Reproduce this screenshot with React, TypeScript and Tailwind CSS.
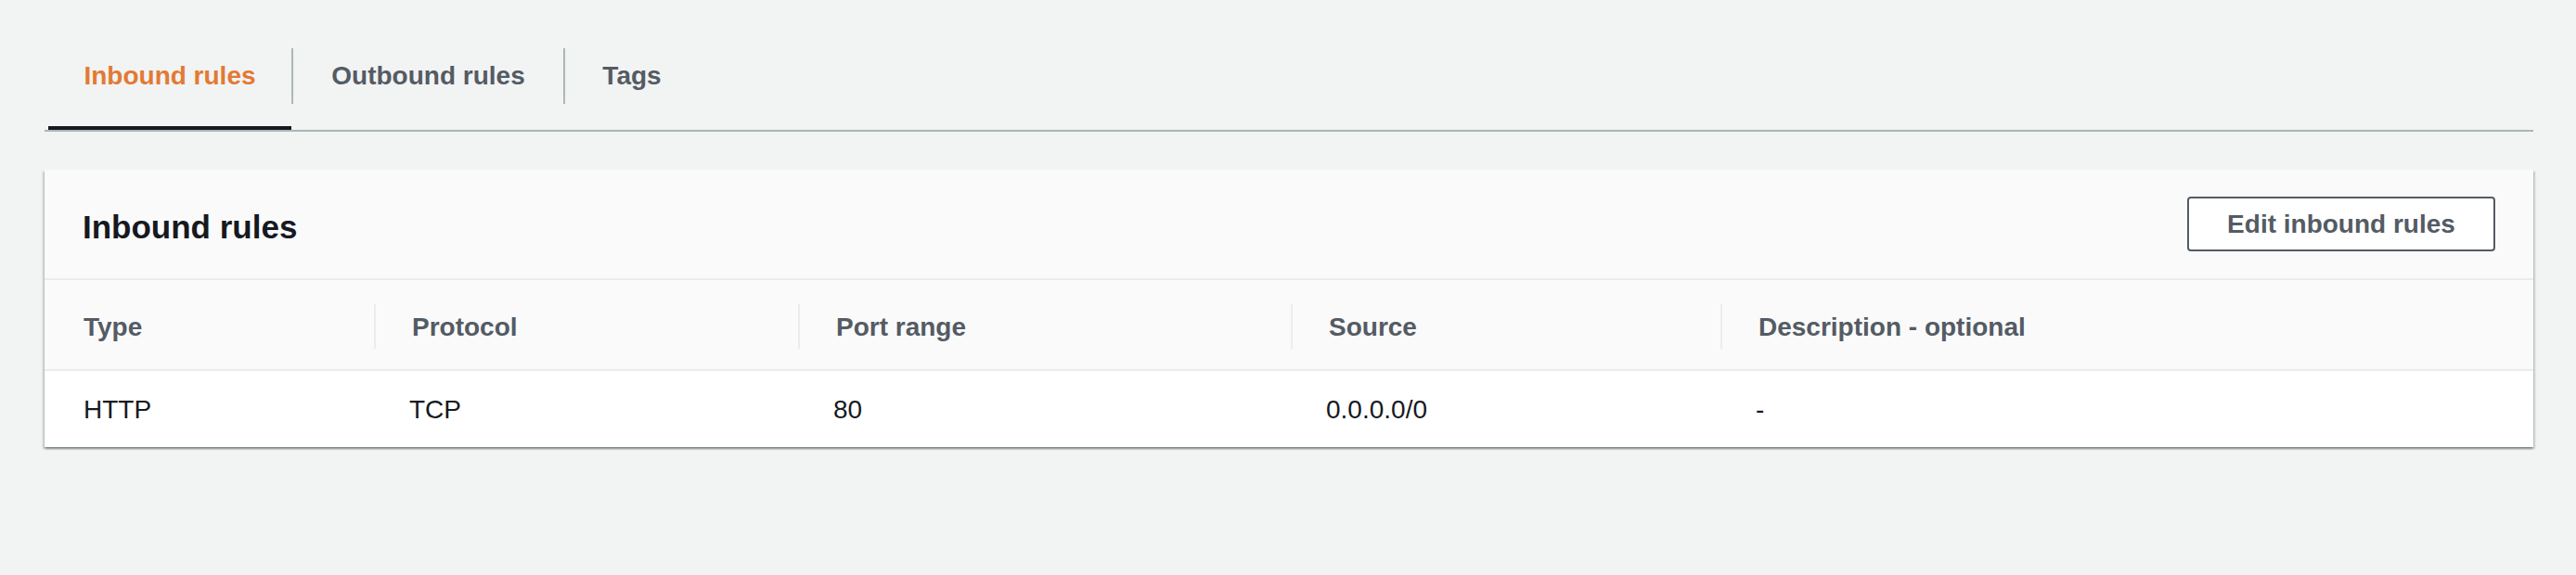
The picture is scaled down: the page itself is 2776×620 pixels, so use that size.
import React from "react";

const font = { fontFamily: '"Liberation Sans", Arial, sans-serif' };

function Tab({ label, active, width }: { label: string; active?: boolean; width: string }) {
  return (
    <div className={`flex flex-col ${width}`}>
      <div
        className={`h-[60px] flex items-center justify-center text-[28px] leading-[32px] font-bold whitespace-nowrap ${
          active ? "text-[#e27a33]" : "text-[#545b64]"
        }`}
      >
        {label}
      </div>
      <div className="h-[24px]" />
      <div className={`h-[4px] ${active ? "bg-[#16191f]" : "bg-transparent"}`} />
    </div>
  );
}

function Sep() {
  return <div className="w-[2px] h-[60px] bg-[#aab7b8] shrink-0" />;
}

const headers = ["Type", "Protocol", "Port range", "Source", "Description - optional"];
const row = ["HTTP", "TCP", "80", "0.0.0.0/0", "-"];

export default function App() {
  return (
    <div className="w-full h-[620px] bg-[#f2f3f3] pl-[48px] pr-[46px]" style={font}>
      {/* Tabs */}
      <div className="pt-[52px] border-b-2 border-[#aab7b8]">
        <div className="flex items-start ml-[4px]">
          <Tab label="Inbound rules" active width="w-[262px]" />
          <Sep />
          <Tab label="Outbound rules" width="w-[291px]" />
          <Sep />
          <Tab label="Tags" width="w-[144px]" />
        </div>
      </div>

      {/* Panel */}
      <div className="mt-[41px] bg-white shadow-[0_2px_2px_0_rgba(0,28,36,0.3),2px_2px_2px_0_rgba(0,28,36,0.15),-2px_2px_2px_0_rgba(0,28,36,0.15)]">
        <div className="h-[119px] bg-[#fafafa] border-b-2 border-[#eaeded] flex items-start justify-between pl-[41px] pr-[41px] pt-[29px]">
          <h2 className="mt-[13px] text-[35px] leading-[40px] font-bold text-[#16191f]">Inbound rules</h2>
          <button className="w-[332px] h-[59px] bg-white border-2 border-[#545b64] rounded-[4px] flex items-center justify-center text-[28px] leading-[32px] font-bold text-[#545b64]">
            Edit inbound rules
          </button>
        </div>
        <div className="grid grid-cols-[355px_457px_531px_463px_1fr] bg-[#fafafa] border-b-2 border-[#eaeded] h-[98px]">
          {headers.map((h, i) => (
            <div key={h} className="flex items-start">
              {i > 0 && <div className="w-[2px] h-[48px] mt-[26px] bg-[#eaeded] shrink-0" />}
              <div
                className={`pt-[35px] ${i > 0 ? "pl-[39px]" : "pl-[42px]"} text-[28px] leading-[32px] font-bold text-[#545b64] whitespace-nowrap`}
              >
                {h}
              </div>
            </div>
          ))}
        </div>
        <div className="grid grid-cols-[355px_457px_531px_463px_1fr] bg-white h-[82px]">
          {row.map((c, i) => (
            <div
              key={i}
              className={`pt-[26px] ${i === 0 ? "pl-[42px]" : "pl-[38px]"} text-[28px] leading-[32px] text-[#16191f] whitespace-nowrap`}
            >
              {c}
            </div>
          ))}
        </div>
      </div>
    </div>
  );
}
